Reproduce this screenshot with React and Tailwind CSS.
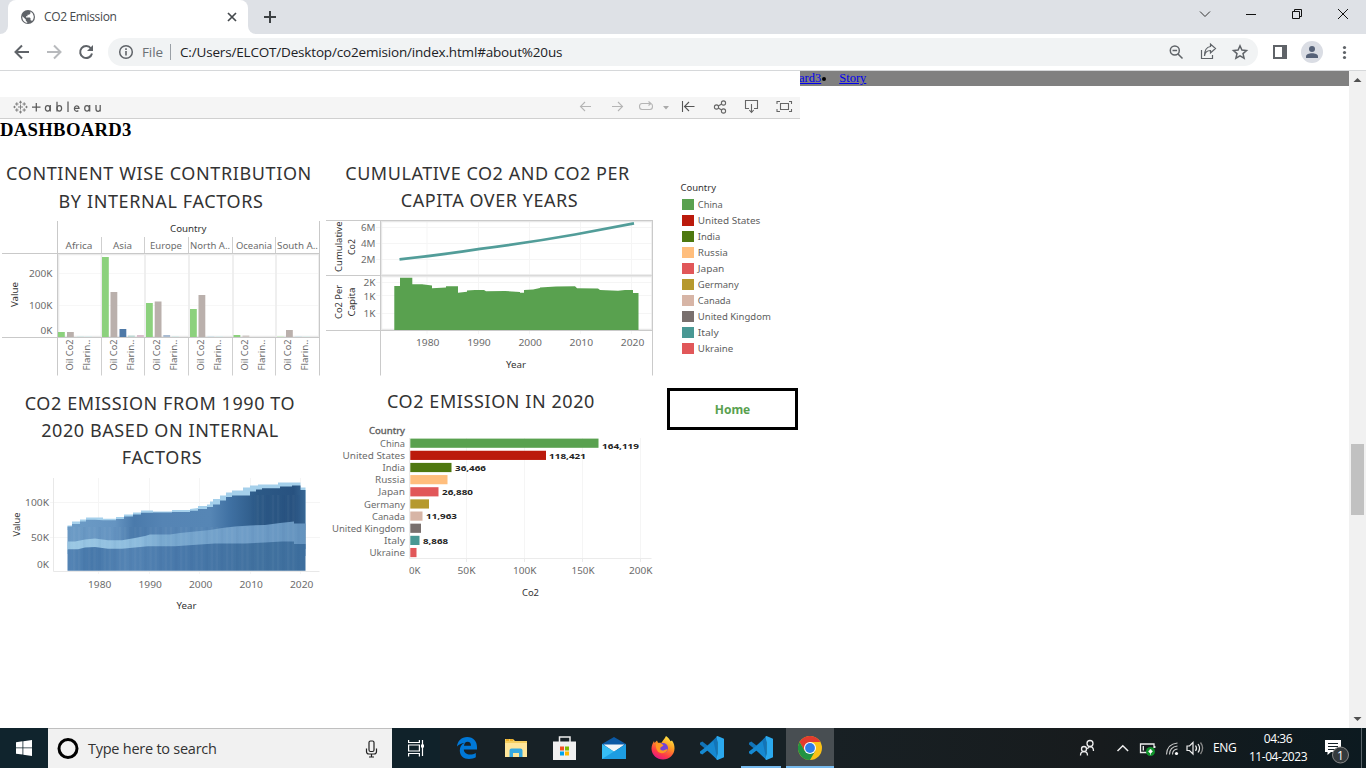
import React from "react";

const UI = "font-['Open_Sans','Noto_Sans',sans-serif]";
const COUNTRIES = [
  ["China", "#59a14f", 598.5, "164,119", 602, 639],
  ["United States", "#bb1a0c", 546, "118,421", 549, 586],
  ["India", "#4e7810", 451.5, "36,466", 455, 486],
  ["Russia", "#ffbe7d", 447.5],
  ["Japan", "#e15759", 438.5, "26,880", 442, 473],
  ["Germany", "#b6992d", 429],
  ["Canada", "#d7b5a6", 422.5, "11,963", 426, 457],
  ["United Kingdom", "#79706e", 421],
  ["Italy", "#499894", 419.5, "8,868", 423, 448],
  ["Ukraine", "#e15759", 416.5],
];

/* Chart label with a fixed run length */
function L({ x, y, w, children, fill = "#6c6c6c", anchor = "start", size = 9.5, ...rest }) {
  return (
    <text x={x} y={y} fontSize={size} fill={fill} textAnchor={anchor} textLength={w} lengthAdjust="spacingAndGlyphs" {...rest}>
      {children}
    </text>
  );
}

function TabStrip() {
  return (
    <div className="flex h-[34px] bg-[#dee1e6]">
      <div className="flex w-2 items-end bg-white"><div className="h-full w-full rounded-br-lg bg-[#dee1e6]" /></div>
      <div className="flex h-[34px] w-[240px] items-center rounded-t-lg bg-white pl-3">
        <svg width="16" height="16" viewBox="0 0 16 16">
          <circle cx="8" cy="8" r="7" fill="#5f6368" />
          <path d="M2.4 7.2l3.4 3.3v1.2l1.4 1.2v1.2A6 6 0 0 1 2.4 7.2zM12 12.2c-.3-.7-.8-.9-1.5-.9v-2l-.7-.7H6V7.200h1.500V5.800h1.600l1.300-1.300V2.600a6 6 0 0 1 1.600 9.600z" fill="#fff" />
        </svg>
        <span className="ml-2 w-[160px] text-[12px] tracking-[-0.35px] text-[#45494d]">CO2 Emission</span>
        <svg className="ml-5" width="16" height="16" viewBox="0 0 16 16" stroke="#45494d" strokeWidth="1.7"><path d="M4 4l8 8M12 4l-8 8" /></svg>
      </div>
      <div className="flex w-2 items-end bg-white"><div className="h-full w-full rounded-bl-lg bg-[#dee1e6]" /></div>
      <svg className="ml-[6px] mt-[9px]" width="16" height="16" viewBox="0 0 16 16" stroke="#3c4043" strokeWidth="2"><path d="M8 2v12M2 8h12" /></svg>
      <svg className="ml-auto" width="176" height="34" viewBox="1190 0 176 34" fill="none" stroke="#111">
        <path d="M1200 11.500l5 5 5-5" stroke="#333" />
        <path d="M1246 14.500h10M1292.500 11.500h7v7h-7zM1294.500 11V9.500h7v7H1300M1338 9l10 10M1348 9l-10 10" />
      </svg>
    </div>
  );
}

function Toolbar() {
  return (
    <div className="flex h-[37px] items-center border-b border-[#d6d8da] bg-white">
      <svg width="108" height="36" viewBox="0 34 108 36" fill="none" strokeWidth="2">
        <path d="M29 52H16M22 45.500L15.500 52l6.500 6.500" stroke="#5f6368" />
        <path d="M47 52h13M54 45.500l6.500 6.500-6.500 6.500" stroke="#b8babd" />
        <path d="M91 48.500A6 6 0 1 0 92 53.500" stroke="#5f6368" />
        <path d="M93 45v6h-6z" fill="#5f6368" />
      </svg>
      <div className="flex h-7 w-[1150px] items-center rounded-full bg-[#f1f3f4] pl-[10px]">
        <svg width="16" height="16" viewBox="0 0 16 16"><circle cx="8" cy="8" r="6.300" fill="none" stroke="#5f6368" strokeWidth="1.500" /><path d="M8 7v4.500M8 4.200v1.700" stroke="#5f6368" strokeWidth="1.600" /></svg>
        <span className="ml-2 w-7 whitespace-nowrap text-[13.500px] tracking-[-0.1px] text-[#6b7075]">File</span>
        <span className="h-4 w-px bg-[#9aa0a6]" />
        <span className="ml-[9px] whitespace-nowrap text-[13.5px] tracking-[-0.175px] text-[#202124]">C:/Users/ELCOT/Desktop/co2emision/index.html#about%20us</span>
        <svg className="ml-auto mr-2 shrink-0" width="84" height="28" viewBox="1166 38 84 28" fill="none" stroke="#5f6368" strokeWidth="1.500">
          <circle cx="1174.800" cy="50.500" r="4.500" /><path d="M1178 54l4.500 4.500M1172.500 50.500h4.600" />
          <path d="M1201.500 50v8.500h11V55M1204.500 56c.5-4 3-5.500 6-5.500V53l5-4.500-5-4.500v2.500c-4 .5-6 4-6 9.500z" strokeWidth="1.200" />
          <path d="M1240 45.800l1.900 4.300 4.600.4-3.500 3.100 1.100 4.600-4.100-2.400-4.100 2.400 1.100-4.600-3.500-3.100 4.600-.4z" />
        </svg>
      </div>
      <svg width="108" height="36" viewBox="1258 34 108 36" fill="#5f6368">
        <path d="M1273 45h14v14h-14zM1275 47v10h7v-10z" fillRule="evenodd" />
        <circle cx="1312" cy="52" r="11" fill="#dadde4" /><circle cx="1312" cy="49" r="3" fill="#566278" /><path d="M1306 58v-1.500c0-2 3-3.200 6-3.200s6 1.200 6 3.200V58z" fill="#566278" />
        <circle cx="1344.500" cy="47.500" r="1.600" /><circle cx="1344.500" cy="52.500" r="1.600" /><circle cx="1344.500" cy="57.500" r="1.600" />
      </svg>
    </div>
  );
}

function Star({ x, y, r }) {
  return <path d={`M${x - r} ${y}h${2 * r}M${x} ${y - r}v${2 * r}`} />;
}

function TableauBar() {
  return (
    <div className="flex h-[22px] w-[800px] items-center justify-between border-b border-[#d0d0d0] bg-[#f5f5f5]">
      <svg width="110" height="21" viewBox="0 97 110 21" fill="none" stroke="#777" strokeWidth="0.9">
        <Star x={20.500} y={107} r={2.500} /><Star x={20.500} y={102.200} r={1.500} /><Star x={20.500} y={112} r={1.500} />
        <Star x={16.800} y={104} r={1.700} /><Star x={24.200} y={104} r={1.700} /><Star x={16.800} y={110} r={1.700} /><Star x={24.200} y={110} r={1.700} />
        <Star x={14.500} y={107} r={1.200} /><Star x={26.500} y={107} r={1.200} />
        <g stroke="#5a5a5a" strokeWidth="1.250">
          <path d="M32 107h8.500M36.300 103v8.500M68 101.500v10.500" />
          <ellipse cx="47.700" cy="108.300" rx="2.300" ry="2.800" /><path d="M50.300 105v6.500M57 101.800v9.700" />
          <ellipse cx="59.300" cy="108.300" rx="2.300" ry="2.800" /><path d="M74.500 108.300h4.500a2.300 2.700 0 1 0-.7 2.200" />
          <ellipse cx="87" cy="108.300" rx="2.300" ry="2.800" /><path d="M89.700 105v6.500M96 105v4a2 2.300 0 0 0 4.200 0v-4v6.500" />
        </g>
      </svg>
      <svg width="225" height="21" viewBox="575 97 225 21" fill="none" stroke="#666" strokeWidth="1.100">
        <g stroke="#b5b5b5">
          <path d="M591 106.500h-10.500M585 102l-4.500 4.500 4.500 4.500M612 106.500h10.500M618 102l4.500 4.500-4.500 4.500" />
          <path d="M648 103.500h-6q-2.500 0-2.500 3t2.500 3h8q2.500 0 2.500-3 0-2-1-2.500M646 103.500h5M648.500 101.500l2.500 2-2.500 2" />
          <path d="M663 106h6l-3 3.500z" fill="#aaa" stroke="none" />
        </g>
        <path d="M682.500 101v11M694.500 106.500H684M689 102l-4.500 4.500 4.500 4.500" stroke="#555" />
        <circle cx="716.500" cy="107" r="2.100" /><circle cx="723.500" cy="103" r="2.100" /><circle cx="723.500" cy="111" r="2.100" /><path d="M718.300 106l3.300-2M718.300 108l3.300 2" />
        <path d="M749 108.500h-3.500v-8h12v8H754M751.500 104v8M749.300 110l2.200 2.400 2.200-2.400" />
        <path d="M780.500 103.500h8v6h-8zM777 104v-2.500h3M789 101.500h2.500v2.500M791.500 109v2.500H789M780 111.500h-3V109" />
      </svg>
    </div>
  );
}

const TITLE = "text-center text-[18px] text-[#333] whitespace-nowrap";

function ContinentChart() {
  const edges = [57.5, 101.5, 144.5, 188.5, 232.5, 275.5];
  const names = [["Africa", 65.5, 27], ["Asia", 113, 19], ["Europe", 150, 32], ["North A..", 190, 40], ["Oceania", 236, 36], ["South A..", 277, 41]];
  const bars = [
    [58, 332, "#8cd17d"], [67, 332, "#bab0ac"], [77, 336, "#dcebea"], [85, 336, "#e0eeee"],
    [102, 257, "#8cd17d"], [110.500, 292, "#bab0ac"], [119.500, 329, "#4e79a7"], [128, 335.500, "#bdd8d4"], [137, 335, "#d9bfcc"],
    [146, 303, "#8cd17d"], [154.700, 301.500, "#bab0ac"], [163.300, 335, "#a9bbd1"], [172, 336, "#dcebea"],
    [190, 309, "#8cd17d"], [198.500, 295, "#bab0ac"], [207.500, 336, "#d9e6ec"], [216, 336, "#e0eeee"],
    [233.500, 335, "#8cd17d"], [242.500, 335.500, "#d0c9c6"], [277, 336, "#d9efd5"], [286, 330, "#bab0ac"], [295, 336, "#dce8ec"], [303, 336, "#e3f0ee"],
  ];
  return (
    <svg width="322" height="160" viewBox="0 218 322 160" fontFamily="Noto Sans">
      <path d="M58 273.500h262M58 305.500h262" stroke="#f7f7f7" />
      <path d="M58.500 254.500h260.500v82H58.500zM101.500 254v83M145 254v83M189 254v83M233 254v83M276 254v83" fill="none" stroke="#ebebeb" strokeWidth="1.600" />
      {bars.map(([x, y, c]) => <rect key={x} x={x} y={y} width="6.800" height={337 - y} fill={c} />)}
      <path d="M2 253.500h318M2 337.500h318M57.500 221v154.500M319.500 221v154.500" stroke="#c9c9c9" fill="none" />
      {edges.slice(1).map((x) => <path key={x} d={`M${x} 237v16M${x} 338v37.500`} stroke="#cfcfcf" />)}
      <L x={170} y={232} w={36.500} fill="#333">Country</L>
      {names.map(([n, x, w]) => <L key={n} x={x} y={249} w={w}>{n}</L>)}
      <L x={29} y={276.700} w={23.500}>200K</L><L x={29} y={308.700} w={23.500}>100K</L><L x={40.500} y={333.700} w={12}>0K</L>
      <L x={0} y={0} w={25} fill="#333" transform="translate(18 307) rotate(-90)">Value</L>
      {edges.map((x) => (
        <g key={x}>
          <L x={0} y={0} w={31} transform={`translate(${x + 15.500} 370.500) rotate(-90)`}>Oil Co2</L>
          <L x={0} y={0} w={31} transform={`translate(${x + 32.500} 370.500) rotate(-90)`}>Flarin..</L>
        </g>
      ))}
    </svg>
  );
}

const YEARS = ["1980", "1990", "2000", "2010", "2020"];

function CumulativeChart() {
  return (
    <svg width="335" height="160" viewBox="322 218 335 160" fontFamily="Noto Sans">
      <path d="M376 227.500h276M376 243.500h276M376 259.500h276M376 282.500h276M376 295.500h276M376 313.500h276M427 221v113M478.500 221v113M529.500 221v113M580.500 221v113M631.500 221v113" stroke="#f5f5f5" />
      <path d="M381.500 221.500h270.500v53.500h-270.500zM381.500 276.500h270.500v53h-270.500z" fill="none" stroke="#e8e8e8" strokeWidth="1.400" />
      <path d="M394.300 330V286H400V277.800H412.300V284.300H422L432 285.500V288.300L446 287.500V286.300H458V292.800L467 291.800V290.500L475 290H484L486 291.300L505 291L520 292V292.800H524V290L533 289.500L540 288V287.500L556 286.500L575 286.300L577 288.300L598 288.500L600 290L618 290.800L625 290H633V293H638.500V330z" fill="#59a14f" />
      <path d="M399.500 259.300Q445 254.500 480 248.900Q530 242.500 575 234.500L634 223.300" stroke="#499894" strokeWidth="2.700" strokeOpacity=".95" fill="none" />
      <path d="M326 220.500h327M326 275.500h55M326 330.500h327M380.500 220v155.500M652.500 220v155.500" stroke="#cacaca" />
      <path d="M381 275.500h271" stroke="#dadada" />
      <L x={361} y={231.300} w={14.500}>6M</L><L x={361} y={247.300} w={14.500}>4M</L><L x={361} y={263} w={14.500}>2M</L>
      <L x={363.500} y={286.300} w={12}>2K</L><L x={363.500} y={299.500} w={12}>1K</L><L x={363.500} y={317.200} w={12}>1K</L>
      <L x={0} y={0} w={50.500} fill="#333" transform="translate(342.300 272) rotate(-90)">Cumulative</L>
      <L x={0} y={0} w={16} fill="#333" transform="translate(355.300 255) rotate(-90)">Co2</L>
      <L x={0} y={0} w={34} fill="#333" transform="translate(342.300 319) rotate(-90)">Co2 Per</L>
      <L x={0} y={0} w={29} fill="#333" transform="translate(355.300 316.500) rotate(-90)">Capita</L>
      {YEARS.map((t, i) => <L key={t} x={416 + i * 51.200} y={346} w={23.500}>{t}</L>)}
      <L x={506} y={368} w={20} fill="#333">Year</L>
    </svg>
  );
}

function EmissionChart() {
  const stripes = Array.from({ length: 46 }, (_, i) => i);
  return (
    <svg width="322" height="146" viewBox="0 474 322 146" fontFamily="Noto Sans">
      <defs>
        <linearGradient id="upper"><stop offset="0" stopColor="#6d9cc6" /><stop offset=".2" stopColor="#6594c1" /><stop offset=".28" stopColor="#4a7aab" /><stop offset=".4" stopColor="#5584b4" /><stop offset=".6" stopColor="#5686b5" /><stop offset=".68" stopColor="#4071a3" /><stop offset=".8" stopColor="#2c5986" /><stop offset=".95" stopColor="#285280" /><stop offset="1" stopColor="#386794" /></linearGradient>
        <linearGradient id="middle"><stop offset="0" stopColor="#9bc8e4" /><stop offset=".3" stopColor="#8cbbdd" /><stop offset=".4" stopColor="#79a9d0" /><stop offset=".7" stopColor="#719fc9" /><stop offset="1" stopColor="#6594bf" /></linearGradient>
        <linearGradient id="lower"><stop offset="0" stopColor="#5686b6" /><stop offset=".1" stopColor="#4778aa" /><stop offset=".25" stopColor="#5484b4" /><stop offset=".45" stopColor="#4979ab" /><stop offset=".8" stopColor="#41719f" /><stop offset="1" stopColor="#3e6f9e" /></linearGradient>
      </defs>
      <path d="M50 502.500h270M50 537.500h270M98.500 478v96M149.500 478v96M199.500 478v96M250.500 478v96M300.500 478v96" stroke="#f5f5f5" />
      <path d="M53.500 478v93.500h266" stroke="#e8e8e8" fill="none" />
      <path d="M67.500 530V525.500H72V521.500H80V519.500H86V517.500H103V518.800H116V517H124V514.500H133V512.500H141V510.500H153V511.500H172V510H190V509L198 508V506H207V504.500H210V501.500H213V499H220V495.500H226V492.500H232V490.500H243V487.500H250V485.500H258V484.500H278V482.500H300.500V487.500H305.500V530z" fill="#a5d0eb" />
      <path d="M67.500 549V526.500H72V524H80V521.500H86V519.700H95L103 520.200H116V519H124V516.500H133V514.500H141V512.700H153V512.500H172V512H190V510.800H198V509H207V507H213V504.500H220V500.500H226V497H232V495.500H250V491.500H256V489.500H262V488.300H280V486.500H292V485.500H300.500V490H305.500V549z" fill="url(#upper)" />
      <path d="M67.500 554V541.500H75L85 539.500L95 538.500L108 540.300H122L135 538L145 536L150 534.500H170L180 533L200 531L210 530L222 528L235 526.500L250 525.500L265 525L280 523L294 521.500V523.500H305.500V556z" fill="url(#middle)" />
      <path d="M67.500 570.700V549.300H78L85 547.500L95 547L108 548.800H122L135 547.500L148 546.300H175L200 544.500L215 543.500H245L265 542.500L282 541.500H294V544H305.500V570.700z" fill="url(#lower)" />
      {stripes.map((i) => <path key={i} d={`M${69 + i * 5.100} ${i > 35 ? 495 : 527}V570.500`} stroke={i % 3 ? "#ffffff" : "#123f70"} strokeOpacity=".035" strokeWidth="2.500" />)}
      <L x={25} y={506.200} w={24}>100K</L><L x={31} y={541.200} w={18}>50K</L><L x={37} y={568} w={12}>0K</L>
      <L x={0} y={0} w={24} fill="#333" transform="translate(20 536.500) rotate(-90)">Value</L>
      {YEARS.map((t, i) => <L key={t} x={88 + i * 50.500} y={588} w={23.300}>{t}</L>)}
      <L x={176.500} y={609} w={20} fill="#333">Year</L>
    </svg>
  );
}

const WIDTHS = [25, 62.5, 22.5, 30, 26.5, 41, 33, 73, 21, 35.5];

function CountryChart() {
  return (
    <svg width="335" height="184" viewBox="322 420 335 184" fontFamily="Noto Sans">
      <path d="M466.500 438v120M524.500 438v120M582.500 438v120M640.500 438v120" stroke="#f5f5f5" />
      <path d="M409.500 438v120.500h242M466.500 558v4M524.500 558v4M582.500 558v4M640.500 558v4" stroke="#ebebeb" fill="none" />
      <L x={369} y={433.500} w={36} size={8} fill="#555" stroke="#666" strokeWidth=".3">Country</L>
      {COUNTRIES.map(([n, c, end, v, vx, ve], i) => {
        const cy = 443.200 + i * 12.150;
        return (
          <g key={n}>
            <L x={405 - WIDTHS[i]} y={cy + 3.600} w={WIDTHS[i]}>{n}</L>
            <rect x="410.300" y={cy - 4.600} width={end - 410.300} height="9.200" fill={c} />
            {v && <L x={vx} y={cy + (i === 0 ? 6 : 3.200)} w={ve - vx} size={7} fill="#222" fontWeight="700">{v}</L>}
          </g>
        );
      })}
      <L x={409} y={574} w={11.500}>0K</L><L x={457.500} y={574} w={18}>50K</L><L x={513} y={574} w={23.500}>100K</L><L x={571.500} y={574} w={23}>150K</L><L x={629} y={574} w={23.500}>200K</L>
      <L x={522} y={596} w={17} fill="#333">Co2</L>
    </svg>
  );
}

function Legend() {
  return (
    <div className="flex w-[143px] flex-col pl-[10px] pt-[30px] font-['Noto_Sans',sans-serif]">
      <svg className="ml-[13px]" width="120" height="178" viewBox="680 180 120 178" fontFamily="Noto Sans">
        <L x={680.500} y={191} w={35.500} fill="#333">Country</L>
        {COUNTRIES.map(([n, c], i) => (
          <g key={n}>
            <rect x="682" y={199 + i * 16} width="12" height="11" fill={c} />
            <L x={697.800} y={208 + i * 16} w={WIDTHS[i]} fill="#606060">{n}</L>
          </g>
        ))}
      </svg>
      <button className="mt-[30px] flex h-[42px] w-[131px] items-center justify-center border-[3px] border-black bg-white pt-[2px] text-[12px] font-bold text-[#59a14f]">Home</button>
    </div>
  );
}

function Page() {
  return (
    <main className="flex h-[657px] bg-white">
      <section className="flex w-[800px] flex-col pt-[26px]">
        <TableauBar />
        <h1 className="h-[31px] font-['Liberation_Serif',serif] text-[18.700px] font-bold leading-[22px] tracking-[0.3px] text-black">DASHBOARD3</h1>
        <div className="flex font-['Noto_Sans',sans-serif]">
          <div className="flex w-[322px] flex-col pt-[9px]">
            <h2 className={`${TITLE} h-[59px] pr-1 leading-[28px] tracking-[0.62px]`}>CONTINENT WISE CONTRIBUTION<br /><span className="pl-[4px]">BY INTERNAL FACTORS</span></h2>
            <ContinentChart />
            <h2 className={`${TITLE} mt-[12px] h-[84px] pr-[2px] leading-[27px] tracking-[0.58px]`}>CO2 EMISSION FROM 1990 TO<br />2020 BASED ON INTERNAL<br /><span className="pl-1">FACTORS</span></h2>
            <EmissionChart />
          </div>
          <div className="flex w-[335px] flex-col pt-[10px]">
            <h2 className={`${TITLE} h-[58px] pr-[4px] leading-[27px] tracking-[0.54px]`}>CUMULATIVE CO2 AND CO2 PER<br /><span className="pl-[4px]">CAPITA OVER YEARS</span></h2>
            <CumulativeChart />
            <h2 className={`${TITLE} mt-[10px] h-8 pl-[3px] leading-[26px] tracking-[0.58px]`}>CO2 EMISSION IN 2020</h2>
            <CountryChart />
          </div>
          <Legend />
        </div>
      </section>
      <nav className="h-[15px] w-[549px] overflow-hidden bg-[#808080] font-['Liberation_Serif',serif] text-[12.500px] leading-[14px] text-[#0000ee]">
        <div className="flex"><a className="-ml-px underline">ard3</a><svg className="ml-px mr-[13px] mt-[6px]" width="4" height="4"><circle cx="2" cy="2" r="2" /></svg><a className="underline">Story</a></div>
      </nav>
      <div className="flex w-[17px] flex-col items-center bg-[#f1f1f1]">
        <svg width="17" height="17"><path d="M4.500 11h8l-4-4z" fill="#505050" /></svg>
        <div className="mt-[356px] h-[71px] w-[13px] bg-[#c1c1c1]" />
        <svg className="mt-auto" width="17" height="17"><path d="M4.500 6h8l-4 4z" fill="#505050" /></svg>
      </div>
    </main>
  );
}

function VsCode() {
  return <svg width="24" height="24" viewBox="0 0 24 24"><path d="M17.500 0L7.500 9.500 2.300 5.500 0 6.800v1.800l13.500 10.800L17.500 24z" fill="#1274b8" /><path d="M17.500 24L7.500 14.500l-5.200 4L0 17.200v-1.800L13.500 5z" fill="#1689d1" /><path d="M17.500 0L24 2.800v18.400L17.500 24l-1-.5 1-6V6.500l-1-6z" fill="#2ba9ee" /></svg>;
}

function Taskbar() {
  const slot = "flex h-10 w-[49px] items-center justify-center";
  return (
    <footer className="flex h-10 bg-[#10222a] text-white">
      <div className="flex w-12 items-center justify-center bg-[#10242d]">
        <svg width="16" height="16" viewBox="0 0 16 16" fill="#fff"><path d="M0 2.200l6.500-.9v6.200H0zM7.300 1.200L16 0v7.500H7.300zM0 8.300h6.500v6.300L0 13.700zM7.300 8.300H16V16l-8.700-1.200z" /></svg>
      </div>
      <div className="flex w-[344px] items-center border-t border-[#bfbfbf] bg-[#f1f1f1] pl-[9px] text-[#333]">
        <svg width="22" height="22"><circle cx="11" cy="10.500" r="9" fill="none" stroke="#000" strokeWidth="3" /></svg>
        <span className="ml-[9px] text-[14.500px] tracking-[-0.25px]">Type here to search</span>
        <svg className="ml-auto mr-[14px]" width="13" height="18" viewBox="0 0 13 18" fill="none" stroke="#222" strokeWidth="1.200"><rect x="4" y="1" width="5" height="10.500" rx="1.500" /><path d="M1.500 8.500v3q0 2.500 2.500 2.500h5q2.500 0 2.500-2.500v-3M6.500 14v3M4 17h5" /></svg>
      </div>
      <div className="flex h-10 w-12 items-center justify-center">
        <svg width="16" height="17" viewBox="0 0 16 17" fill="none" stroke="#fff" strokeWidth="1.200"><path d="M.6 0v2.500h10.800V0M.6 5h10.800v6H.6zM.6 16.500V13.500h10.800v3M14.500 0v16" /><path d="M13 4.500h3v3h-3z" fill="#fff" stroke="none" /></svg>
      </div>
      <div className="flex bg-[#172126] pl-[2px] pr-px">
        <div className={slot}>
          <svg width="20" height="22" viewBox="0 0 20 22"><path d="M0 9.500C.5 4 4.500 0 10.200 0 16.500 0 20 4.500 20 10v2.500H6.800c.2 3.500 3 5 6.200 5 2.200 0 4-.5 5.800-1.600v4.400C17 21.300 14.600 22 12 22 6.500 22 2.800 18.700 2.800 13.500c0-3.600 1.800-6.300 4.800-7.800C4.800 6 2 7.200 0 9.500zM7 8.800h7c0-2.700-1.200-4-3.400-4S7.400 6.300 7 8.800z" fill="#0078d7" /></svg>
        </div>
        <div className={slot}>
          <svg width="22" height="19" viewBox="0 0 22 19"><path d="M0 0h8l2 2h12v16H0z" fill="#f5cf61" /><path d="M0 4h22v14H0z" fill="#ffe69b" /><path d="M1 1h3M5 1h3" stroke="#e8a317" strokeWidth="1.500" /><path d="M4.500 18v-6.500q0-2 2-2h9q2 0 2 2V18h-3.500v-4H8v4z" fill="#36a9e1" /></svg>
        </div>
        <div className={slot}>
          <svg width="23" height="24" viewBox="0 0 23 24"><path d="M6.500 7V1h10.500v6" fill="none" stroke="#eee" strokeWidth="1.500" /><path d="M0 5.500h23V24H0z" fill="#f0f0f0" /><path d="M7 10.500h4v4H7z" fill="#f25022" /><path d="M12 10.500h4v4h-4z" fill="#7fba00" /><path d="M7 15.500h4v4H7z" fill="#00a4ef" /><path d="M12 15.500h4v4h-4z" fill="#ffb900" /></svg>
        </div>
        <div className={slot}>
          <svg width="24" height="22" viewBox="0 0 24 22"><path d="M0 7l12-7 12 7v4H0z" fill="#0c59a4" /><path d="M1.500 7.500h21L12 15z" fill="#f3f6f8" /><path d="M0 7l12 7.500V22H0z" fill="#36bdf4" /><path d="M24 7L0 22h24z" fill="#1d9de2" /></svg>
        </div>
        <div className={slot}>
          <svg width="24" height="24" viewBox="0 0 24 24">
            <defs><linearGradient id="fox" x1=".8" y1="0" x2=".3" y2="1"><stop offset="0" stopColor="#fff04a" /><stop offset=".4" stopColor="#ff9a22" /><stop offset=".75" stopColor="#ff3b47" /><stop offset="1" stopColor="#e31587" /></linearGradient></defs>
            <path d="M15 0c3 2 3.500 3.500 4.500 5.200l1.500-.7C23 7 23.500 10 23.500 12.500 23.500 19 18 23.500 12 23.500S.5 19 .5 12.500C.5 9 2 7 3 5l.5 2L6 4.500 7 6.800h3.500C12 4 13.500 3 15 0z" fill="url(#fox)" /><circle cx="12" cy="12" r="5" fill="#7543d8" /><path d="M5 7.500c4-1 6 0 7.500 2L9.500 11.500c-1 2 1 3.500 3 3 2-.5 3-1.500 4-1-1 4-8 5-10 1.500-1.500-2.500-2-5-1.500-7.500z" fill="#ff9822" />
          </svg>
        </div>
        <div className={slot}><VsCode /></div>
        <div className="flex h-10 w-[49px] flex-col items-center justify-between pt-2"><VsCode /><div className="h-[2px] w-10 bg-[#76b9ed]" /></div>
      </div>
      <div className="flex h-10 w-12 flex-col items-center justify-between bg-[#484e52] pt-2">
        <svg width="24" height="24" viewBox="0 0 24 24"><circle cx="12" cy="12" r="12" fill="#fbc116" /><path d="M1.600 6A12 12 0 0 1 22.400 6H12l-5.200 9z" fill="#e33b2e" /><path d="M1.600 6A12 12 0 0 0 12 24l5.200-9H6.800z" fill="#229342" /><circle cx="12" cy="12" r="6" fill="#fff" /><circle cx="12" cy="12" r="4.900" fill="#2f7de9" /></svg>
        <div className="h-[2px] w-full bg-[#76b9ed]" />
      </div>
      <div className="flex grow justify-end bg-[linear-gradient(90deg,#182024,#171b1d_50%,#0c1a20)]">
        <svg width="136" height="40" viewBox="1070 728 136 40" fill="none" stroke="#eee" strokeWidth="1.300">
          <circle cx="1090" cy="743.500" r="3" /><path d="M1087.500 749q.5-2 2.500-2.300 3.500 0 3.500 4.300" /><circle cx="1084" cy="749" r="2.500" /><path d="M1080.500 755.500q0-3.800 3.500-3.800t3.500 3.800" />
          <path d="M1117.500 751l5.300-5.300 5.300 5.300" strokeWidth="1.500" />
          <path d="M1149 752.500h-8.500v-8.500h13.500v4M1143.300 746v4.500M1154.800 746v2" />
          <circle cx="1150.500" cy="751.500" r="4.500" fill="#10932c" stroke="none" /><path d="M1150.500 749l-2 2.500 2 2 2-2zM1150.500 753v2" strokeWidth=".6" fill="#fff" />
          <g strokeWidth="1.100" stroke="#ccc"><path d="M1166.500 754.500Q1167 744 1177.500 743M1169.500 754.500q0-7.500 8-8.500M1172.500 754.500q0-5 5-5.500" /><circle cx="1176.500" cy="753.500" r="1.600" fill="#fff" stroke="none" /></g>
          <path d="M1187 746h2.500l3.500-3.500v11.500l-3.500-3.500H1187zM1195.500 745.500q2 2.700 0 5.500M1198 744q3.200 4.200 0 8.500" strokeWidth="1.200" /><path d="M1200.500 742.500q4.200 5.700 0 11.500" stroke="#888" />
        </svg>
        <span className="mr-[12px] flex w-[24px] items-center whitespace-nowrap pl-[7px] text-[12px] tracking-[-0.4px]">ENG</span>
        <div className="flex w-[72px] flex-col items-center whitespace-nowrap pt-[2px] text-[12px] leading-[18px] tracking-[-0.45px]"><span>04:36</span><span>11-04-2023</span></div>
        <svg className="shrink-0" width="52" height="40" viewBox="1314 728 52 40">
          <path d="M1325 740h16v12h-10l-3.500 3v-3h-2.500z" fill="#fff" /><path d="M1328 743.500h10M1328 746.500h10M1328 749.500h7" stroke="#132027" />
          <circle cx="1340.500" cy="755" r="8" fill="#343a3d" stroke="#888" /><text x="1340.500" y="759.500" fontSize="12" fontFamily="Open Sans" fill="#fff" textAnchor="middle">1</text>
          <path d="M1361.500 728v40" stroke="#59636a" />
        </svg>
      </div>
    </footer>
  );
}

export default function App() {
  return (
    <div className={`flex h-[768px] w-[1366px] flex-col overflow-hidden bg-white ${UI}`}>
      <TabStrip />
      <Toolbar />
      <Page />
      <Taskbar />
    </div>
  );
}
